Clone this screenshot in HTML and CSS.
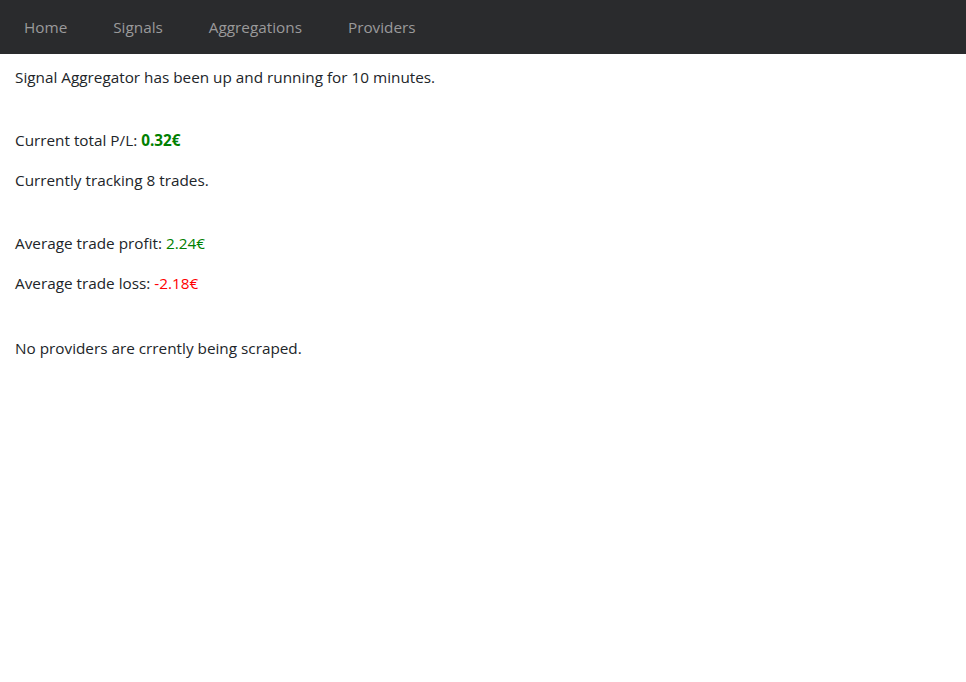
FILE: index.html
```html
<!DOCTYPE html>
<html lang="en">
<head>
<meta charset="utf-8">
<title>Signal Aggregator</title>
<link rel="stylesheet" href="styles.css">
</head>
<body>
<nav class="navbar">
  <ul class="nav-list">
    <li><a class="nav-link" href="#">Home</a></li>
    <li><a class="nav-link" href="#">Signals</a></li>
    <li><a class="nav-link" href="#">Aggregations</a></li>
    <li><a class="nav-link" href="#">Providers</a></li>
  </ul>
</nav>
<main class="content">
  <p class="line">Signal Aggregator has been up and running for 10 minutes.</p>
  <p class="line spaced">Current total P/L: <strong class="profit">0.32€</strong></p>
  <p class="line">Currently tracking 8 trades.</p>
  <p class="line spaced">Average trade profit: <span class="profit">2.24€</span></p>
  <p class="line">Average trade loss: <span class="loss">-2.18€</span></p>
  <p class="line spaced last">No providers are crrently being scraped.</p>
</main>
</body>
</html>
```
FILE: styles.css
```css
html, body {
  margin: 0;
  padding: 0;
  background: #ffffff;
}
body {
  font-family: "Open Sans", "Noto Sans", sans-serif;
  font-size: 15.3px;
  line-height: 24px;
  color: #212529;
}
.navbar {
  background: #2a2b2d;
  height: 54px;
  display: flex;
  align-items: center;
}
.nav-list {
  list-style: none;
  margin: 0;
  padding: 0 0 0 24px;
  display: flex;
  gap: 46px;
}
.nav-link {
  color: #9a9a9b;
  text-decoration: none;
  font-size: 15.3px;
}
.content {
  padding: 11px 15px 0;
}
.line {
  margin: 0 0 16px;
}
.spaced {
  margin-top: 39px;
}
.last {
  margin-top: 41px;
}
.profit {
  color: #008000;
}
strong.profit {
  font-weight: 700;
}
.loss {
  color: #ff0000;
}
```
